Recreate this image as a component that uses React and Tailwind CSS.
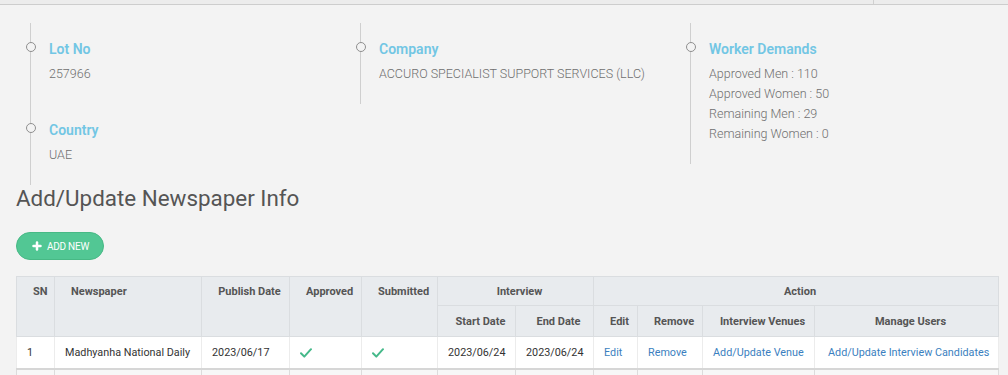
import { Plus } from 'lucide-react'

const FONT = { fontFamily: 'Roboto, "Liberation Sans", sans-serif' }

const COLUMNS = [
  [
    { title: 'Lot No', values: ['257966'] },
    { title: 'Country', values: ['UAE'] },
  ],
  [{ title: 'Company', values: ['ACCURO SPECIALIST SUPPORT SERVICES (LLC)'] }],
  [
    {
      title: 'Worker Demands',
      values: [
        'Approved Men : 110',
        'Approved Women : 50',
        'Remaining Men : 29',
        'Remaining Women : 0',
      ],
    },
  ],
]

const WIDTHS = [38, 147, 88, 72, 76, 78, 78, 44, 65, 112, 184]

function TimelineItem({ title, values }) {
  return (
    <div className="relative pt-[17px] pb-[20px] pl-[18px]">
      <span className="absolute left-[-5px] top-[19px] h-[10px] w-[10px] rounded-full border border-[#8f8f8f] bg-[#f3f3f3]" />
      <p className="m-0 text-[14px] leading-[18px] font-semibold text-[#72c6e4]">{title}</p>
      <div className="mt-[6px]">
        {values.map((v) => (
          <p key={v} className="m-0 text-[12.5px] leading-[20px] font-light text-[#6f6f6f]">
            {v}
          </p>
        ))}
      </div>
    </div>
  )
}

function Check() {
  return (
    <svg width="12" height="10" viewBox="0 0 12 10" className="block">
      <path d="M1 5.2 L4.3 8.6 L11 1.2" fill="none" stroke="#45b98a" strokeWidth="2" strokeLinecap="round" strokeLinejoin="round" />
    </svg>
  )
}

const th = 'border border-[#dadde0] bg-[#e8ebee] text-[11px] leading-[13px] font-bold text-[#555] pl-4 pr-2 text-center'
const td = 'border-x border-[#ececec] pl-[10px] pr-1 pt-[2px] text-[10.8px] leading-[14px] h-[32px] align-middle'
const text = 'text-[#333]'
const link = 'text-[#3b7fc0]'

export default function App() {
  return (
    <div className="min-h-screen bg-[#f3f3f3]" style={FONT}>
      <div className="h-[5px] border-b border-[#cdcdcd] bg-[#ececec]">
        <div className="ml-[873px] h-[4px] w-px bg-[#d0d0d0]" />
      </div>

      <div className="pl-4 pr-[10px]">
        <div className="mt-[18px] grid grid-cols-[330px_330px_330px] items-start">
          {COLUMNS.map((items, i) => (
            <div key={i} className="pl-[14px]">
              <div className="border-l border-[#cfcfcf]">
                {items.map((item) => (
                  <TimelineItem key={item.title} {...item} />
                ))}
              </div>
            </div>
          ))}
        </div>

        <h1 className="m-0 text-[22.4px] leading-[26px] font-normal text-[#555]">Add/Update Newspaper Info</h1>

        <button
          type="button"
          className="mt-[21px] flex h-[28px] w-[88px] items-center justify-center gap-[4px] rounded-full border border-[#47b985] bg-[#52c794] text-[10px] tracking-tight text-white"
        >
          <Plus className="h-[12px] w-[12px]" strokeWidth={5} />
          ADD NEW
        </button>

        <table className="mt-4 w-[982px] table-fixed border-collapse">
          <colgroup>
            {WIDTHS.map((w, i) => (
              <col key={i} style={{ width: w }} />
            ))}
          </colgroup>
          <thead>
            <tr className="h-[29px]">
              <th rowSpan={2} className={`${th} align-top pt-2`}>SN</th>
              <th rowSpan={2} className={`${th} align-top pt-2 !text-left !pl-[16px]`}>Newspaper</th>
              <th rowSpan={2} className={`${th} align-top pt-2`}>Publish Date</th>
              <th rowSpan={2} className={`${th} align-top pt-2`}>Approved</th>
              <th rowSpan={2} className={`${th} align-top pt-2`}>Submitted</th>
              <th colSpan={2} className={th}>Interview</th>
              <th colSpan={4} className={th}>Action</th>
            </tr>
            <tr className="h-[31px]">
              <th className={th}>Start Date</th>
              <th className={th}>End Date</th>
              <th className={th}>Edit</th>
              <th className={th}>Remove</th>
              <th className={th}>Interview Venues</th>
              <th className={th}>Manage Users</th>
            </tr>
          </thead>
          <tbody>
            <tr className="border-b-2 border-[#d6d6d6] bg-white">
              <td className={`${td} ${text}`}>1</td>
              <td className={`${td} ${text}`}>Madhyanha National Daily</td>
              <td className={`${td} ${text}`}>2023/06/17</td>
              <td className={td}><Check /></td>
              <td className={td}><Check /></td>
              <td className={`${td} ${text}`}>2023/06/24</td>
              <td className={`${td} ${text}`}>2023/06/24</td>
              <td className={`${td} ${link}`}>Edit</td>
              <td className={`${td} ${link}`}>Remove</td>
              <td className={`${td} ${link}`}>Add/Update Venue</td>
              <td className={`${td} ${link} !pl-[13px]`}>Add/Update Interview Candidates</td>
            </tr>
            <tr className="bg-[#f7f7f7]">
              {WIDTHS.map((w, i) => (
                <td key={i} className="h-[32px] border border-[#dcdcdc]" />
              ))}
            </tr>
          </tbody>
        </table>
      </div>
    </div>
  )
}
